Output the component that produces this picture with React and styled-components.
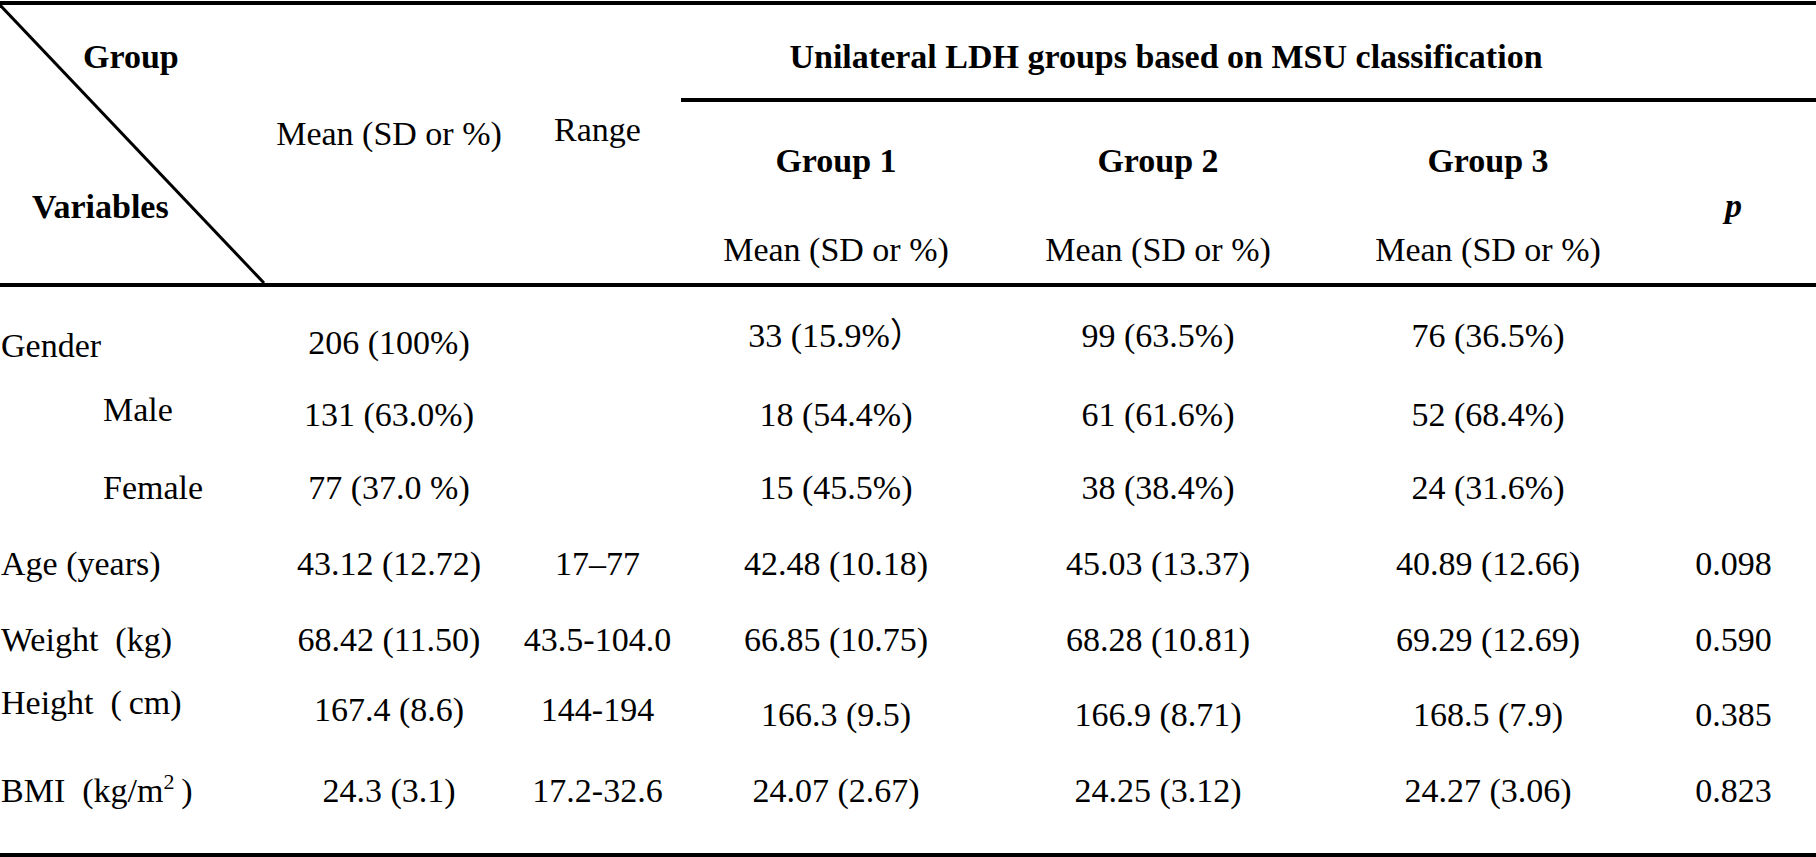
import React from 'react';
import styled, { createGlobalStyle } from 'styled-components';

const serif = `"Liberation Serif", "Times New Roman", Times, "Noto Sans CJK SC", serif`;

const GlobalStyle = createGlobalStyle`
  html, body {
    margin: 0;
    padding: 0;
    background: #ffffff;
  }
  body {
    font-family: ${serif};
    color: #000000;
    overflow: hidden;
  }
`;

const Page = styled.div`
  width: 1816px;
  height: 857px;
  padding-top: 1px;
  box-sizing: border-box;
  font-family: ${serif};
`;

const Table = styled.table`
  width: 1816px;
  table-layout: fixed;
  border-collapse: separate;
  border-spacing: 0;
  border-top: 4px solid #000;
  font-family: ${serif};
  font-size: 34px;
  line-height: 38px;
  color: #000;
`;

const Row = styled.tr`
  height: ${p => p.$h}px;
`;

const Cell = styled.td`
  padding: ${p => p.$pt || 0}px 0 0 ${p => p.$indent || 0}px;
  vertical-align: top;
  text-align: ${p => (p.$left ? 'left' : 'center')};
  white-space: nowrap;
  font-family: ${serif};
  font-weight: ${p => (p.$bold ? 700 : 400)};
  border-bottom: ${p => (p.$rule ? '4px solid #000' : 'none')};
`;

const HeadCell = styled.th`
  padding: ${p => p.$pt || 0}px 0 0 0;
  vertical-align: top;
  text-align: center;
  white-space: nowrap;
  font-family: ${serif};
  font-weight: ${p => (p.$bold ? 700 : 400)};
  font-style: ${p => (p.$italic ? 'italic' : 'normal')};
  border-bottom: ${p => (p.$rule ? '4px solid #000' : 'none')};
`;

const DiagonalCell = styled.th`
  position: relative;
  padding: 0;
  vertical-align: top;
  text-align: left;
  font-family: ${serif};
  border-bottom: 4px solid #000;
`;

const DiagonalLine = styled.svg`
  position: absolute;
  inset: 0;
  width: 100%;
  height: 100%;
  overflow: visible;
`;

const CornerStack = styled.div`
  display: flex;
  flex-direction: column;
  gap: 112px;
  padding-top: 33px;
  font-weight: 700;
`;

const CornerLabel = styled.span`
  padding-left: ${p => p.$x}px;
`;

const Sup = styled.sup`
  font-size: 22px;
  line-height: 0;
  vertical-align: 13px;
`;

const cols = [264, 250, 167, 310, 334, 326, 165];

const rows = [
  {
    label: 'Gender', h: 92, pt: 16, labelPt: 40,
    cells: [['206 (100%)', 37], [''], ['33 (15.9%\uFF09', 30], ['99 (63.5%)', 30], ['76 (36.5%)', 30], ['']],
  },
  {
    label: 'Male', indent: 103, h: 74, pt: 17, labelPt: 12,
    cells: [['131 (63.0%)'], [''], ['18 (54.4%)'], ['61 (61.6%)'], ['52 (68.4%)'], ['']],
  },
  {
    label: 'Female', indent: 103, h: 76, pt: 16,
    cells: [['77 (37.0 %)'], [''], ['15 (45.5%)'], ['38 (38.4%)'], ['24 (31.6%)'], ['']],
  },
  {
    label: 'Age (years)', h: 76, pt: 16,
    cells: [['43.12 (12.72)'], ['17\u201377'], ['42.48 (10.18)'], ['45.03 (13.37)'], ['40.89 (12.66)'], ['0.098']],
  },
  {
    label: 'Weight\u00a0 (kg)', h: 72, pt: 16,
    cells: [['68.42 (11.50)'], ['43.5-104.0'], ['66.85 (10.75)'], ['68.28 (10.81)'], ['69.29 (12.69)'], ['0.590']],
  },
  {
    label: 'Height\u00a0 (\u2009cm)', h: 76, pt: 19, labelPt: 7,
    cells: [['167.4 (8.6)', 14], ['144-194', 14], ['166.3 (9.5)'], ['166.9 (8.71)'], ['168.5 (7.9)'], ['0.385']],
  },
  {
    label: (
      <>
        BMI{'\u00a0 '}(kg/m<Sup>2</Sup>{'\u2009'})
      </>
    ),
    h: 104, pt: 19, last: true,
    cells: [['24.3 (3.1)'], ['17.2-32.6'], ['24.07 (2.67)'], ['24.25 (3.12)'], ['24.27 (3.06)'], ['0.823']],
  },
];

export default function App() {
  return (
    <Page>
      <GlobalStyle />
      <Table>
        <colgroup>
          {cols.map((w, i) => (
            <col key={i} style={{ width: w }} />
          ))}
        </colgroup>
        <thead>
          <Row $h={97}>
            <DiagonalCell rowSpan={3}>
              <DiagonalLine preserveAspectRatio="none">
                <line x1="0" y1="0" x2="100%" y2="100%" stroke="#000" strokeWidth="3" />
              </DiagonalLine>
              <CornerStack>
                <CornerLabel $x={83}>Group</CornerLabel>
                <CornerLabel $x={32}>Variables</CornerLabel>
              </CornerStack>
            </DiagonalCell>
            <HeadCell rowSpan={3} $pt={110} $rule>Mean (SD or %)</HeadCell>
            <HeadCell rowSpan={3} $pt={106} $rule>Range</HeadCell>
            <HeadCell colSpan={3} $pt={33} $bold $rule>
              Unilateral LDH groups based on MSU classification
            </HeadCell>
            <HeadCell $rule />
          </Row>
          <Row $h={110}>
            <HeadCell $pt={40} $bold>Group 1</HeadCell>
            <HeadCell $pt={40} $bold>Group 2</HeadCell>
            <HeadCell $pt={40} $bold>Group 3</HeadCell>
            <HeadCell rowSpan={2} $pt={85} $bold $italic $rule>p</HeadCell>
          </Row>
          <Row $h={75}>
            <HeadCell $pt={19} $rule>Mean (SD or %)</HeadCell>
            <HeadCell $pt={19} $rule>Mean (SD or %)</HeadCell>
            <HeadCell $pt={19} $rule>Mean (SD or %)</HeadCell>
          </Row>
        </thead>
        <tbody>
          {rows.map((r, i) => (
            <Row key={i} $h={r.h}>
              <Cell $left $indent={r.indent || 1} $pt={r.labelPt ?? r.pt} $rule={r.last}>
                {r.label}
              </Cell>
              {r.cells.map(([text, pt], j) => (
                <Cell key={j} $pt={pt ?? r.pt} $rule={r.last}>
                  {text}
                </Cell>
              ))}
            </Row>
          ))}
        </tbody>
      </Table>
    </Page>
  );
}
